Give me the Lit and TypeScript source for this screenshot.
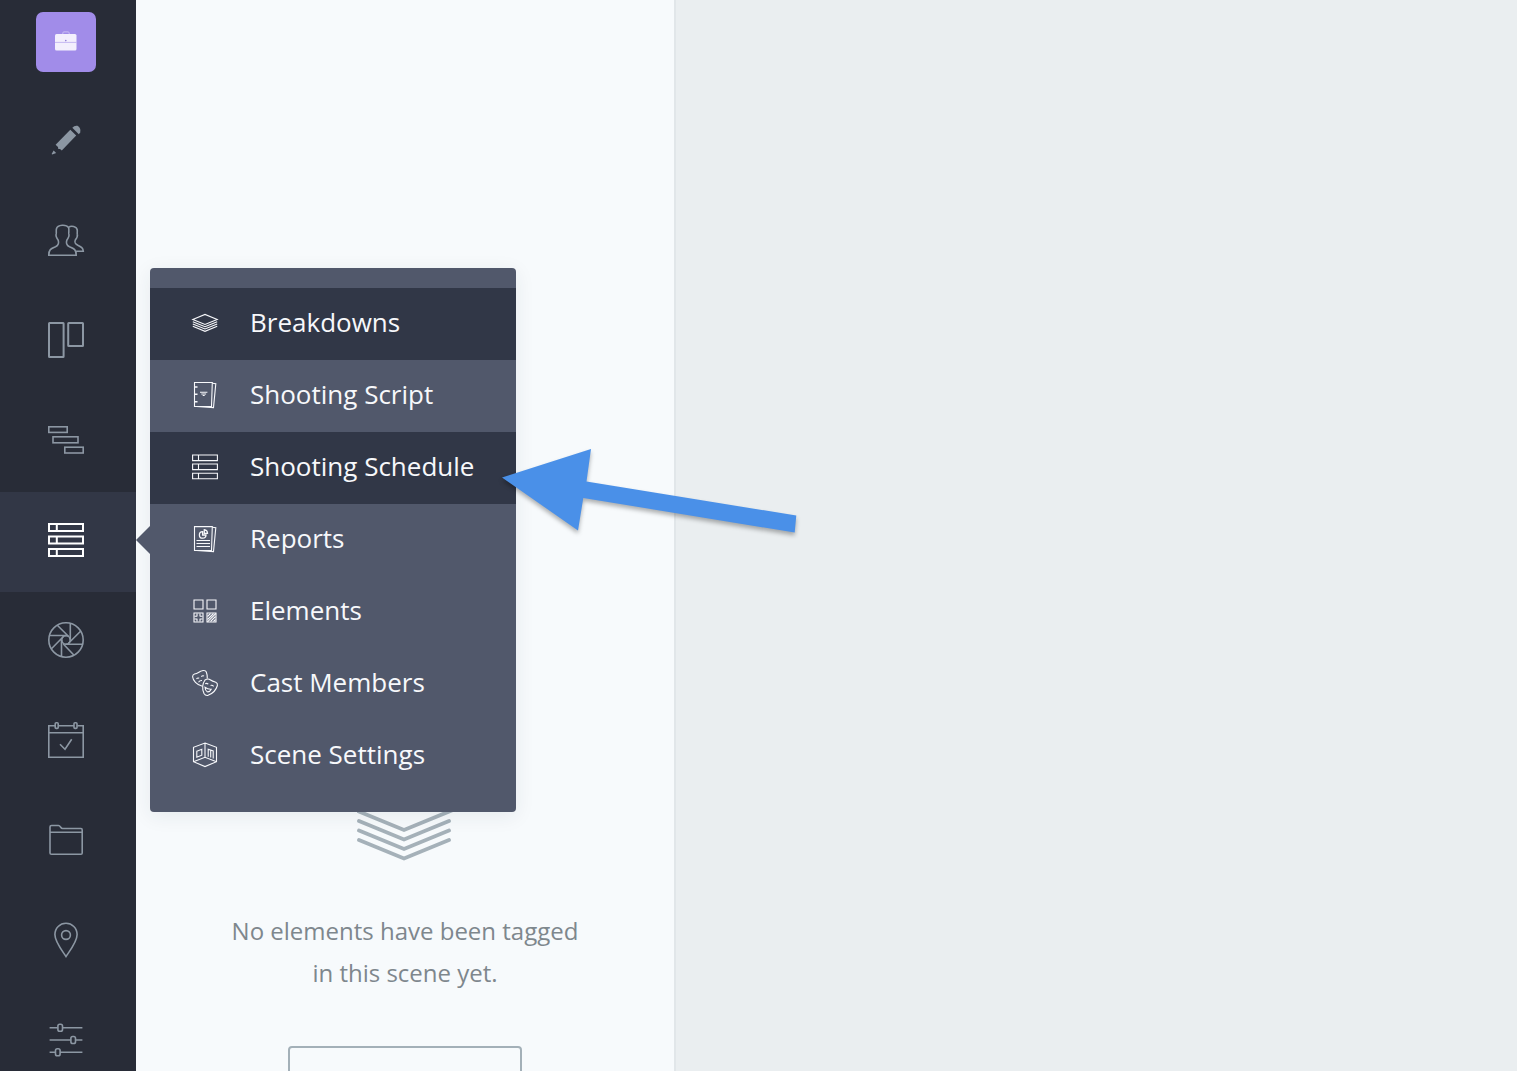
import { LitElement, html, css, svg, type TemplateResult } from "lit";
import { customElement, property } from "lit/decorators.js";
import { classMap } from "lit/directives/class-map.js";

interface Entry {
  label: string;
  icon: TemplateResult;
  active?: boolean;
}

const navIcons = {
  pencil: svg`<g fill="currentColor" stroke="none">
    <path d="M24.300 5.800 Q26.500 3.200 29.500 3.800 Q33.200 6 32.200 10.500 L30.800 12.200 Z" />
    <path d="M22.300 7.800 L28.200 13.600 L13.800 28.500 L12 27 L10.300 27 L10 25 L7.600 22.800 Z" />
    <path d="M5.600 28.400 L8.200 31 L4.200 32.600 L3.600 32 Z" />
  </g>`,
  people: svg`<path d="M20.600 5.500 C18.500 2.500 9.500 2.200 8.400 7 C8 9 8.500 10.500 8.200 11.700 C7.500 13.500 9 16.500 10.200 18.200 C11.500 22 10 23.500 7.500 24.700 C3.500 26.500 .8 27 .8 33.200 H28.200 C28.200 27 25.500 26.500 21.500 24.700 C19 23.500 17.500 22 18.800 18.200 C20 16.500 21.500 13.500 20.800 11.700 C20.500 10.500 21.400 8.500 20.600 5.500 C23 3.200 28.800 4.500 29.200 8 C29.500 9.500 29 11 29.300 12.200 C29.800 14 28.500 16.500 27.300 18 C26.300 20.600 27 21.700 29.800 23.200 C33 24.800 35 25.600 35.300 29.300 H28" />`,
  board: svg`<g stroke-width="2"><rect x="1" y="1" width="14.600" height="34" rx=".5" /><rect x="20.200" y="1" width="14.800" height="23" rx=".5" /></g>`,
  gantt: svg`<rect x=".8" y="4.800" width="18.400" height="5.600" /><rect x="5" y="14.800" width="25" height="6" /><rect x="16.800" y="25.200" width="18.400" height="5.800" />`,
  schedule: svg`<g stroke-width="2"><path d="M1 2h34v7H1z M1 14.500h34v7H1z M1 27h34v7H1z M8.800 2v7 M8.800 14.500v7 M8.800 27v7" /></g>`,
  aperture: svg`<circle cx="18" cy="18" r="17.200" /><circle cx="18" cy="18" r="4.200" />
    <path d="M9.300 3.300 L20.700 14.500 M22.300 1.300 V17.500 M32.800 9 L20.500 21.300 M35 22.300 H17.500 M25.800 33 L15.300 22 M13.500 34.800 V18 M3.200 27 L15.500 14.500 M1.300 13.500 H18.500" />`,
  calendar: svg`<path d="M7 3.800 H.8 V35.200 H35.200 V3.800 H29.300 M10.400 3.800 H26 M.8 10.700 H35.200 M12 22.300 L17 27.300 L23.700 17.300" /><rect x="7.200" y=".8" width="3" height="5.600" rx="1" /><rect x="26" y=".8" width="3" height="5.600" rx="1" />`,
  folder: svg`<path d="M2 31 V5 Q2 3.500 3.500 3.500 H10.500 C12.500 3.500 12.500 6.500 14.500 6.500 H33 Q34.200 6.500 34.200 8 V31 Q34.200 32.300 33 32.300 H3.500 Q2 32.300 2 31 Z M2 10.200 H34.200" />`,
  pin: svg`<path d="M18 34.500 C14 28.500 6.900 20 6.900 12.600 C6.900 6 12 1.300 18 1.300 C24 1.300 29.100 6 29.100 12.600 C29.100 20 22 28.500 18 34.500 Z" /><circle cx="18" cy="13" r="4.400" />`,
  sliders: svg`<path d="M1.600 5.700 H9.800 M14.600 5.700 H34.400 M1.600 18 H22.800 M27.600 18 H34.400 M1.600 30.200 H7.400 M12.200 30.200 H34.400" /><rect x="9.900" y="2.200" width="4.600" height="7" rx="1.800" /><rect x="22.900" y="14.500" width="4.600" height="7" rx="1.800" /><rect x="7.500" y="26.700" width="4.600" height="7" rx="1.800" />`,
};

const backPage = svg`<path d="M20.300 1.200 L23.800 1.700 L21.500 25.600 L4.500 24.500" />`;

const menuIcons = {
  layers: svg`<path d="M.8 9.400 L13 4.400 L25.200 9.400 L13 14.400 Z M.8 11.700 L13 16.700 L25.200 11.700 M.8 14 L13 19 L25.200 14 M.8 16.300 L13 21.300 L25.200 16.300" />`,
  script: svg`<path d="M2.500 .5 H20.300 L19.500 24.500 H2.500 Z" />${backPage}
    <path d="M3 5h2.500 M3 12.300h2.500 M3 19.700h2.500" stroke-width="1.600" /><path d="M8 10.300h7.400 M9.300 12h4.800 M10.700 13.500h2" />`,
  schedule: svg`<path d="M.6 1h24.800v5.600H.6z M.6 10h24.800v5.600H.6z M.6 19.200h24.800v5.600H.6z M6.500 1v5.600 M6.500 10v5.600 M6.500 19.200v5.600" />`,
  reports: svg`<path d="M2.500 .6 H20.300 L19.500 24.500 H2.500 Z" />${backPage}
    <path d="M10.600 5.600 A3.300 3.300 0 1 0 14 9 H10.600 Z M12.300 7.300 V3.700 Q15.300 4 15.500 7.300 Z" stroke-width="1.300" /><path d="M4.500 14.500h13.500 M4.500 17.500h13.500 M4.500 20.500h13.500" />`,
  elements: svg`<path d="M2 2h9v9H2z M15 2h9v9h-9z M2 15h9v9H2z M15 15h9v9h-9z" />
    <path d="M2.500 18.200h2.800 M7.700 18.200h2.800 M2.500 21h2.800 M7.700 21h2.800 M5 15.500v2.800 M8 15.500v2.800 M5 20.800v2.800 M8 20.800v2.800 M15.500 18.500 L18.500 15.500 M15.500 21.500 L21.500 15.500 M15.500 23.800 L23.800 15.500 M18.500 23.500 L23.500 18.500 M21.500 23.500 L23.500 21.500" />`,
  masks: svg`<path d="M10.400 16.200 C4.500 15 1 10.500 .6 6.800 Q.6 4.600 2.500 4 C6 3.500 7.500 1.200 10 .8 Q13.500 0 14.300 2 Q15.500 5 15.300 8.500" />
    <path d="M13 10 Q15.300 8.500 17.200 9.200 C19.500 10.600 21.500 11.600 23.800 12.200 Q25.800 13.200 25.400 15.500 C24 20.500 20.500 23.800 15.600 25.500 Q13.200 25.700 12 23.500 C10 19 10.200 14 13 10 Z" />
    <path d="M4.500 8.800 Q5.700 7.400 7.200 8.300 M9.300 6.700 Q10.500 5.200 12 6 M6.500 12.200 Q7.800 10.300 10 10.500 M13.200 13.800 Q14.700 12.800 16.300 14.200 M18.600 15.500 Q20.300 14.800 21.600 16.300 M13 17.300 Q16 19.500 19.200 19.300 Q17.800 22.300 15.200 21.800 Q13.200 20.800 13 17.300 Z" />`,
  scene: svg`<path d="M13 1 L24.500 5.300 V19.700 L13 24.600 L1.500 19.700 V5.300 Z M1.500 19.700 L13 15.300 L24.500 19.700 M13 1.200 V15.300" />
    <path d="M4.800 9.200 L9.800 7.300 V13.200 L4.800 15.200 Z M16.200 14.700 V7.200 L21.200 9 V16.600 M18.700 15.600 V8.200" />`,
};

/** Left-hand production toolbar button. */
@customElement("nav-link")
class NavLink extends LitElement {
  @property() label = "";
  @property({ attribute: false }) icon: TemplateResult = svg``;
  @property({ type: Boolean }) active = false;

  static styles = css`
    :host {
      display: block;
      position: relative;
    }
    .link {
      display: flex;
      align-items: center;
      justify-content: center;
      box-sizing: border-box;
      height: 100px;
      padding: 0 4px 4px 0;
      color: #8c97a3;
    }
    .current {
      background: #323746;
      color: #ffffff;
    }
    .glyph {
      width: 36px;
      height: 36px;
      overflow: visible;
    }
  `;

  render() {
    return html`<a
        class=${classMap({ link: true, current: this.active })}
        href="#"
        aria-label=${this.label}
      >
        <svg class="glyph" viewBox="0 0 36 36" fill="none" stroke="currentColor" stroke-width="1.600" aria-hidden="true">
          ${this.icon}
        </svg>
      </a>
      <slot></slot>`;
  }
}

/** Flyout listing the pages of the selected section. */
@customElement("flyout-menu")
class FlyoutMenu extends LitElement {
  @property({ attribute: false }) entries: Entry[] = [];

  static styles = css`
    :host {
      display: block;
      padding: 20px 0;
      border-radius: 4px;
      background: #51586b;
      box-shadow: 0 4px 20px rgba(40, 50, 70, 0.08);
      font-family: "Open Sans", "Noto Sans", sans-serif;
    }
    :host::before {
      content: "";
      position: absolute;
      right: 100%;
      top: 258px;
      border: solid transparent;
      border-width: 14px 14px 14px 0;
      border-right-color: #51586b;
    }
    .entry {
      display: flex;
      align-items: center;
      gap: 32px;
      box-sizing: border-box;
      height: 72px;
      padding: 0 42px 2px;
      color: #f7f8fb;
      font-size: 26px;
      line-height: 36px;
      text-decoration: none;
      white-space: nowrap;
    }
    .marked {
      background: #313747;
    }
    .glyph {
      flex: none;
      width: 26px;
      height: 26px;
      overflow: visible;
    }
    .text {
      padding-bottom: 2px;
    }
  `;

  render() {
    return this.entries.map(
      (e) => html`<a class=${classMap({ entry: true, marked: !!e.active })} href="#">
        <svg class="glyph" viewBox="0 0 26 26" fill="none" stroke="currentColor" stroke-width="1.100" aria-hidden="true">
          ${e.icon}
        </svg>
        <span class="text">${e.label}</span>
      </a>`
    );
  }
}

@customElement("app-root")
class AppRoot extends LitElement {
  private nav: Entry[] = [
    { label: "Script", icon: navIcons.pencil },
    { label: "Contacts", icon: navIcons.people },
    { label: "Boards", icon: navIcons.board },
    { label: "Calendar", icon: navIcons.gantt },
    { label: "Scheduling", icon: navIcons.schedule, active: true },
    { label: "Shots", icon: navIcons.aperture },
    { label: "Tasks", icon: navIcons.calendar },
    { label: "Files", icon: navIcons.folder },
    { label: "Locations", icon: navIcons.pin },
    { label: "Settings", icon: navIcons.sliders },
  ];

  private entries: Entry[] = [
    { label: "Breakdowns", icon: menuIcons.layers, active: true },
    { label: "Shooting Script", icon: menuIcons.script },
    { label: "Shooting Schedule", icon: menuIcons.schedule, active: true },
    { label: "Reports", icon: menuIcons.reports },
    { label: "Elements", icon: menuIcons.elements },
    { label: "Cast Members", icon: menuIcons.masks },
    { label: "Scene Settings", icon: menuIcons.scene },
  ];

  static styles = css`
    :host {
      display: flex;
      position: relative;
      height: 100vh;
      overflow: hidden;
      background: #eaeef0;
      font-family: "Open Sans", "Noto Sans", sans-serif;
    }
    .sidebar {
      position: relative;
      z-index: 1;
      flex: none;
      width: 136px;
      background: #282c37;
    }
    .brand {
      display: flex;
      justify-content: center;
      padding: 12px 4px 20px 0;
    }
    .project {
      display: grid;
      place-items: center;
      width: 60px;
      height: 60px;
      border-radius: 7px;
      background: #a18ce9;
    }
    .case {
      width: 24px;
      height: 24px;
    }
    .flyout {
      position: absolute;
      left: 150px;
      top: -224px;
      width: 366px;
    }
    .panel {
      flex: none;
      display: flex;
      flex-direction: column;
      align-items: center;
      box-sizing: border-box;
      width: 540px;
      padding-top: 792px;
      border-right: 2px solid #e1e6e9;
      background: #f7fafc;
    }
    .stack {
      flex: none;
      width: 96px;
      height: 70px;
    }
    .message {
      max-width: 360px;
      margin: 48px 0 52px;
      color: #7e878d;
      font-size: 24px;
      line-height: 42px;
      text-align: center;
    }
    .action {
      flex: none;
      width: 234px;
      height: 72px;
      border: 2px solid #a3b0b8;
      border-radius: 4px;
      background: transparent;
    }
    .canvas {
      flex: 1;
    }
    .pointer {
      position: absolute;
      z-index: 2;
      left: 500px;
      top: 446px;
      width: 300px;
      height: 90px;
      overflow: visible;
      filter: drop-shadow(0 3px 2px rgba(0, 0, 0, 0.3));
      pointer-events: none;
    }
  `;

  render() {
    return html`
      <nav class="sidebar" aria-label="Project">
        <div class="brand">
          <a class="project" href="#" aria-label="Projects">
            <svg class="case" viewBox="0 0 24 24" aria-hidden="true">
              <path d="M8.800 4.500 V3 Q8.800 1.900 10 1.900 H14 Q15.200 1.900 15.200 3 V4.500" fill="none" stroke="#cbbff5" stroke-width="1" />
              <rect x="1" y="4" width="21.500" height="16.500" rx="1.500" fill="#f3effd" />
              <path d="M1 12.400 H22.500" stroke="#b9a9ee" stroke-width=".8" />
              <circle cx="11.800" cy="10.600" r=".8" fill="#8b77d4" />
            </svg>
          </a>
        </div>
        ${this.nav.map(
          (n) => html`<nav-link .label=${n.label} .icon=${n.icon} .active=${!!n.active}>
            ${n.active ? html`<flyout-menu class="flyout" .entries=${this.entries}></flyout-menu>` : null}
          </nav-link>`
        )}
      </nav>
      <section class="panel">
        <svg class="stack" viewBox="0 0 96 70" fill="none" stroke="#a5b1b9" stroke-width="3.800" stroke-linecap="round" stroke-linejoin="miter" aria-hidden="true">
          <path d="M2 19.500 L47 1.500 L92 19.500 L47 38 Z M2 29 L47 47.500 L92 29 M2 38.500 L47 57 L92 38.500 M2 48 L47 66.500 L92 48" />
        </svg>
        <p class="message">No elements have been tagged in this scene yet.</p>
        <button class="action" type="button" aria-label="Add element"></button>
      </section>
      <main class="canvas"></main>
      <svg class="pointer" viewBox="0 0 300 90" aria-hidden="true">
        <path d="M2 31.500 L91 3 L86.500 35.500 L296.300 69.500 L294.700 86.500 L83.300 52 L78 84.500 Z" fill="#4a90e8" />
      </svg>
    `;
  }
}
